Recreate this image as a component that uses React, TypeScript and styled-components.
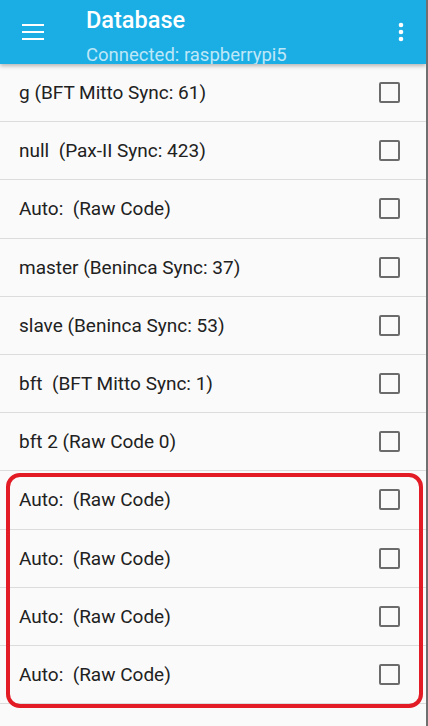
import React from "react";
import styled, { createGlobalStyle } from "styled-components";

const Global = createGlobalStyle`
  html, body { margin: 0; padding: 0; background: #fafafa; }
  body { font-family: Roboto, "Noto Sans", "Liberation Sans", sans-serif; }
`;

const Screen = styled.div`
  position: relative;
  width: 428px;
  height: 726px;
  overflow: hidden;
  background: #fafafa;
  box-sizing: border-box;
  border-right: 2px solid #6f6f6f;
`;

const AppBar = styled.header`
  position: relative;
  z-index: 2;
  height: 64px;
  background: #1aaee5;
  display: flex;
  align-items: flex-start;
  overflow: hidden;
  box-shadow: 0 2px 4px rgba(0, 0, 0, 0.28);
`;

const IconButton = styled.div<{ $w: number }>`
  width: ${(p) => p.$w}px;
  height: 64px;
  display: flex;
  align-items: center;
  justify-content: center;
  flex-shrink: 0;
`;

const Titles = styled.div`
  flex: 1;
  padding: 6px 0 0 20px;
  display: flex;
  flex-direction: column;
  gap: 10px;
`;

const Title = styled.div`
  color: #ffffff;
  font-size: 23.5px;
  font-weight: 500;
  line-height: 28px;
`;

const Subtitle = styled.div`
  color: rgba(255, 255, 255, 0.72);
  font-size: 18.5px;
  line-height: 22px;
  white-space: nowrap;
`;

const List = styled.div`
  display: flex;
  flex-direction: column;
`;

const Row = styled.div`
  height: 57.2px;
  border-bottom: 1px solid #dcdcdc;
  display: flex;
  align-items: center;
  padding: 0 26px 0 19px;
`;

const Label = styled.div`
  flex: 1;
  font-size: 19px;
  color: #212121;
  white-space: pre;
`;

const Check = styled.div`
  width: 17px;
  height: 17px;
  border: 2px solid #6b6b6b;
  border-radius: 2px;
`;

const Highlight = styled.div`
  position: absolute;
  left: 6px;
  top: 473px;
  width: 417px;
  height: 235px;
  box-sizing: border-box;
  border: 4px solid #e21b24;
  border-radius: 14px;
  pointer-events: none;
`;

const items = [
  "g (BFT Mitto Sync: 61)",
  "null  (Pax-II Sync: 423)",
  "Auto:  (Raw Code)",
  "master (Beninca Sync: 37)",
  "slave (Beninca Sync: 53)",
  "bft  (BFT Mitto Sync: 1)",
  "bft 2 (Raw Code 0)",
  "Auto:  (Raw Code)",
  "Auto:  (Raw Code)",
  "Auto:  (Raw Code)",
  "Auto:  (Raw Code)",
];

export default function App() {
  return (
    <>
      <Global />
      <Screen>
        <AppBar>
          <IconButton $w={66}>
            <svg width="22" height="16" viewBox="0 0 22 16">
              <rect x="0" y="0" width="22" height="2" fill="#fff" />
              <rect x="0" y="7" width="22" height="2" fill="#fff" />
              <rect x="0" y="14" width="22" height="2" fill="#fff" />
            </svg>
          </IconButton>
          <Titles>
            <Title>Database</Title>
            <Subtitle>Connected: raspberrypi5</Subtitle>
          </Titles>
          <IconButton $w={51}>
            <svg width="6" height="20" viewBox="0 0 6 20">
              <circle cx="3" cy="3" r="2.3" fill="#fff" />
              <circle cx="3" cy="10" r="2.3" fill="#fff" />
              <circle cx="3" cy="17" r="2.3" fill="#fff" />
            </svg>
          </IconButton>
        </AppBar>
        <List>
          {items.map((t, i) => (
            <Row key={i}>
              <Label>{t}</Label>
              <Check />
            </Row>
          ))}
        </List>
        <Highlight />
      </Screen>
    </>
  );
}
